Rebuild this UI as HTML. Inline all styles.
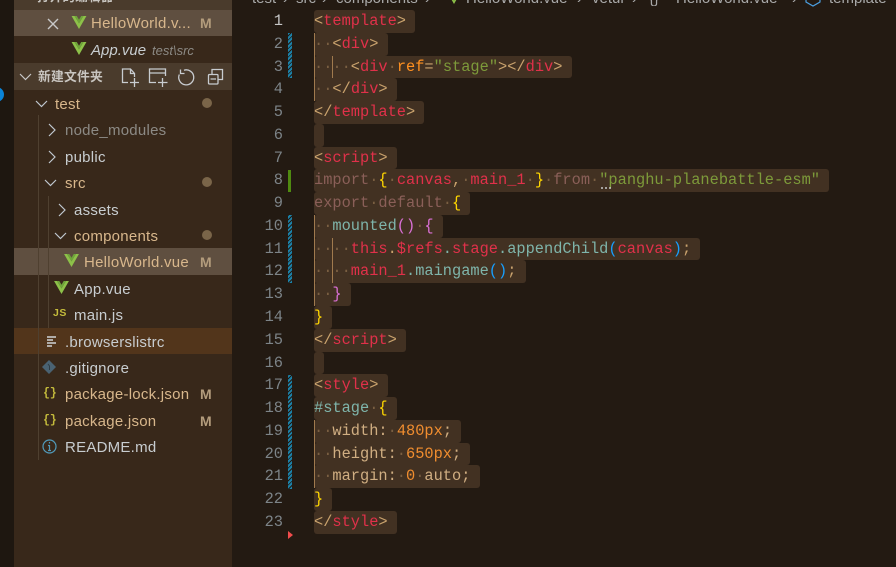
<!DOCTYPE html>
<html><head><meta charset="utf-8">
<style>
html,body{margin:0;padding:0;background:#231a12;width:896px;height:567px;overflow:hidden}
*{box-sizing:border-box}
.abs{position:absolute}
#act{left:0;top:0;width:14px;height:567px;background:#1e1710;overflow:hidden}
#side{left:14px;top:0;width:218px;height:567px;background:#38281a;overflow:hidden}
.t{position:absolute;font:15px/28px "Liberation Sans","Noto Sans CJK SC",sans-serif;white-space:pre;letter-spacing:.25px}
.bar{position:absolute;left:14px;width:218px}
.y{color:#d8b78c}.w{color:#c8cdd0}.g{color:#8c8a85}
.m{position:absolute;left:200px;font:bold 14px/26px "Liberation Sans",sans-serif;color:#b39c7c}
.dot{position:absolute;left:202px;width:10px;height:10px;border-radius:50%;background:#7a6549}
.l{position:absolute;left:314px;height:22.77px;background:#423122;border-radius:3px;font:15.33px/22.77px "Liberation Mono",monospace;white-space:pre;padding-right:1ch}
.n{position:absolute;left:250px;width:33px;text-align:right;font:15.33px/22.77px "Liberation Mono",monospace;color:#7d8488}
.d{color:#7a5f42}.b{color:#c9a26d}.r{color:#e0314a}.o{color:#ff9020}.s{color:#7d9a3a}.i{color:#8a5f58}.yy{color:#ffd700}.c{color:#7fb5ab}.p{color:#da70d6}.bl{color:#179fff}.q{color:#d0ae82}.v{color:#f08d2f}
.gd{position:absolute;width:1px;background:#a07a4e}
.hb{position:absolute;left:288px;width:4px;background:repeating-linear-gradient(-45deg,#1b81a8 0 2px,#231a12 2px 3px)}
.bc{position:absolute;top:-10px;font:15px/18px "Liberation Sans",sans-serif;color:#a8a8a8;white-space:pre}
</style></head><body>
<svg width="0" height="0" style="position:absolute"><defs>
<symbol id="vue" viewBox="0 0 16 14"><polygon points="0,0 3.2,0 8,8 12.8,0 16,0 8,14" fill="#8dc149"/><polygon points="3.2,0 5.6,0 8,4 10.4,0 12.8,0 8,8" fill="#6fa53a"/></symbol>
</defs></svg>

<div id="act" class="abs"><div class="abs" style="left:-11px;top:87px;width:15px;height:15px;border-radius:50%;background:#0a84d8"></div></div>
<div id="side" class="abs"></div>

<div class="bar" style="top:0;height:10px;background:#4a3b2c"></div>
<div class="t" style="left:37px;top:-17px;font-weight:bold;font-size:12.5px;color:#c8c5c0">打开的编辑器</div>
<div class="bar" style="top:10px;height:26px;background:#5f4f40"></div>
<div class="bar" style="top:63px;height:27px;background:#4a3b2c"></div>
<div class="bar" style="top:248px;height:27px;background:#5f4f40"></div>
<div class="bar" style="top:328px;height:26px;background:#52351b"></div>

<div class="gd" style="left:38px;top:115px;height:345px;background:#4f4030"></div>
<div class="gd" style="left:48px;top:196px;height:132px;background:#4f4030"></div>

<svg class="abs" style="left:46px;top:17px" width="14" height="14"><path d="M2 2L12 12M12 2L2 12" stroke="#c8c8c8" stroke-width="1.4"/></svg>
<svg class="abs" style="left:71px;top:16px" width="16" height="13"><use href="#vue"/></svg>
<div class="t y" style="left:91px;top:10px">HelloWorld.v...</div><div class="m" style="top:10px">M</div>
<svg class="abs" style="left:71px;top:42px" width="16" height="13"><use href="#vue"/></svg>
<div class="t w" style="left:91px;top:37px;font-style:italic;letter-spacing:0">App.vue</div>
<div class="t g" style="left:152px;top:37px;font-style:italic;font-size:13px;letter-spacing:0">test\src</div>

<svg class="abs" style="left:19px;top:71px" width="14" height="12"><path d="M1 3L6.5 8.5L12 3" fill="none" stroke="#c8c8c8" stroke-width="1.2"/></svg>
<div class="t" style="left:38px;top:63px;font-size:12.8px;font-weight:bold;letter-spacing:.2px;color:#c8c5c0">新建文件夹</div>
<svg class="abs" style="left:115px;top:62px" width="115" height="28" fill="none" stroke="#c8ccd0" stroke-width="1.3">
<path d="M13 20.500H7.500V7H15.500L19.500 11.500V15M15.500 7V11.500H19.500M15 20.500H24M19.500 16V25"/>
<path d="M41 20.500H34.500V7H50.500V14M34.500 11H50.500M43 20.500H52.500M47.500 16V25"/>
<path d="M69 8.200A7.500 7.500 0 1 1 64.300 12.500M65.500 7.500V11.500H69.500"/>
<rect x="93.500" y="12.500" width="9.500" height="9.500" rx="1"/><path d="M97 12.500V7.500H107.500V17.500H103M95.500 17H101"/>
</svg>

<svg class="abs" style="left:35px;top:98px" width="14" height="12"><path d="M1 3L6.500 8.500L12 3" fill="none" stroke="#c0c8d0" stroke-width="1.2"/></svg>
<div class="t y" style="left:55px;top:91px">test</div><div class="dot" style="top:98px"></div>
<svg class="abs" style="left:47px;top:123px" width="10" height="14"><path d="M2 1L8 7L2 13" fill="none" stroke="#c0c8d0" stroke-width="1.2"/></svg>
<div class="t g" style="left:65px;top:117px">node_modules</div>
<svg class="abs" style="left:47px;top:150px" width="10" height="14"><path d="M2 1L8 7L2 13" fill="none" stroke="#c0c8d0" stroke-width="1.2"/></svg>
<div class="t w" style="left:65px;top:144px">public</div>
<svg class="abs" style="left:44px;top:177px" width="14" height="12"><path d="M1 3L6.500 8.500L12 3" fill="none" stroke="#c0c8d0" stroke-width="1.2"/></svg>
<div class="t y" style="left:65px;top:170px">src</div><div class="dot" style="top:177px"></div>
<svg class="abs" style="left:57px;top:203px" width="10" height="14"><path d="M2 1L8 7L2 13" fill="none" stroke="#c0c8d0" stroke-width="1.2"/></svg>
<div class="t w" style="left:74px;top:197px">assets</div>
<svg class="abs" style="left:54px;top:230px" width="14" height="12"><path d="M1 3L6.500 8.500L12 3" fill="none" stroke="#c0c8d0" stroke-width="1.2"/></svg>
<div class="t y" style="left:74px;top:223px">components</div><div class="dot" style="top:230px"></div>
<svg class="abs" style="left:64px;top:254px" width="15" height="13"><use href="#vue"/></svg>
<div class="t y" style="left:84px;top:249px">HelloWorld.vue</div><div class="m" style="top:249px">M</div>
<svg class="abs" style="left:54px;top:281px" width="15" height="13"><use href="#vue"/></svg>
<div class="t w" style="left:74px;top:276px">App.vue</div>
<div class="t" style="left:53px;top:300px;font:bold 10.5px/26px 'Liberation Sans',sans-serif;color:#c4bb3c;letter-spacing:.5px">JS</div>
<div class="t w" style="left:74px;top:302px">main.js</div>
<svg class="abs" style="left:46px;top:335px" width="12" height="12" stroke="#bdbdbd" stroke-width="1.800"><path d="M1 2H10M1 5H7M1 8H10M1 11H6"/></svg>
<div class="t w" style="left:65px;top:329px">.browserslistrc</div>
<svg class="abs" style="left:42px;top:360px" width="14" height="14"><polygon points="7,0 14,7 7,14 0,7" fill="#4a6272"/><path d="M6 4L7.500 6V10" stroke="#2f3d46" fill="none"/></svg>
<div class="t w" style="left:65px;top:355px">.gitignore</div>
<div class="t" style="left:43px;top:381px;font:bold 11.5px/26px 'Liberation Mono',monospace;color:#c4bb3c;letter-spacing:0">{}</div>
<div class="t y" style="left:65px;top:381px">package-lock.json</div><div class="m" style="top:381px">M</div>
<div class="t" style="left:43px;top:408px;font:bold 11.5px/26px 'Liberation Mono',monospace;color:#c4bb3c;letter-spacing:0">{}</div>
<div class="t y" style="left:65px;top:408px">package.json</div><div class="m" style="top:408px">M</div>
<svg class="abs" style="left:42px;top:439px" width="15" height="15" fill="none"><circle cx="7.500" cy="7.500" r="6.500" stroke="#519aba" stroke-width="1.200"/><path d="M7.500 6V11.500M6 11.500H9M6 6.500H7.500M7.500 3V4.500" stroke="#519aba" stroke-width="1.200"/></svg>
<div class="t w" style="left:65px;top:434px">README.md</div>

<div class="bc" style="left:252px">test</div><div class="bc" style="left:283px">›</div>
<div class="bc" style="left:296px">src</div><div class="bc" style="left:322px">›</div>
<div class="bc" style="left:336px">components</div><div class="bc" style="left:425px">›</div>
<svg class="abs" style="left:449px;top:-4px" width="10" height="8"><use href="#vue"/></svg>
<div class="bc" style="left:466px">HelloWorld.vue</div><div class="bc" style="left:577px">›</div>
<div class="bc" style="left:592px">vetur</div><div class="bc" style="left:632px">›</div>
<div class="bc" style="left:649px">{}</div>
<div class="bc" style="left:676px">HelloWorld.vue</div><div class="bc" style="left:792px">›</div>
<svg class="abs" style="left:805px;top:-6px" width="16" height="13" fill="none"><path d="M8 1L15 5V8L8 12L1 8V5Z" stroke="#4b9fe0" stroke-width="1.200"/></svg>
<div class="bc" style="left:829px">template</div>

<div class="n" style="top:10px;color:#c6c6c6">1</div><div class="n" style="top:32.770px">2</div><div class="n" style="top:55.540px">3</div><div class="n" style="top:78.310px">4</div><div class="n" style="top:101.080px">5</div><div class="n" style="top:123.850px">6</div><div class="n" style="top:146.620px">7</div><div class="n" style="top:169.390px">8</div><div class="n" style="top:192.160px">9</div><div class="n" style="top:214.930px">10</div><div class="n" style="top:237.700px">11</div><div class="n" style="top:260.470px">12</div><div class="n" style="top:283.240px">13</div><div class="n" style="top:306.010px">14</div><div class="n" style="top:328.780px">15</div><div class="n" style="top:351.550px">16</div><div class="n" style="top:374.320px">17</div><div class="n" style="top:397.090px">18</div><div class="n" style="top:419.860px">19</div><div class="n" style="top:442.630px">20</div><div class="n" style="top:465.400px">21</div><div class="n" style="top:488.170px">22</div><div class="n" style="top:510.940px">23</div>

<div class="hb" style="top:33px;height:45px"></div>
<div class="abs" style="left:288px;top:170px;width:3px;height:22px;background:#4f8a10"></div>
<div class="hb" style="top:215px;height:68px"></div>
<div class="hb" style="top:375px;height:114px"></div>
<svg class="abs" style="left:288px;top:531px" width="5" height="8"><polygon points="0,0 5,4 0,8" fill="#f14c4c"/></svg>

<div class="l" style="top:10px"><span class="b">&lt;</span><span class="r">template</span><span class="b">&gt;</span></div>
<div class="l" style="top:32.770px"><span class="d">··</span><span class="b">&lt;</span><span class="r">div</span><span class="b">&gt;</span></div>
<div class="l" style="top:55.540px"><span class="d">····</span><span class="b">&lt;</span><span class="r">div</span><span class="d">·</span><span class="o">ref</span><span class="b">=</span><span class="s">"stage"</span><span class="b">&gt;&lt;/</span><span class="r">div</span><span class="b">&gt;</span></div>
<div class="l" style="top:78.310px"><span class="d">··</span><span class="b">&lt;/</span><span class="r">div</span><span class="b">&gt;</span></div>
<div class="l" style="top:101.080px"><span class="b">&lt;/</span><span class="r">template</span><span class="b">&gt;</span></div>
<div class="l" style="top:123.850px;width:10px;padding:0"></div>
<div class="l" style="top:146.620px"><span class="b">&lt;</span><span class="r">script</span><span class="b">&gt;</span></div>
<div class="l" style="top:169.390px"><span class="i">import</span><span class="d">·</span><span class="yy">{</span><span class="d">·</span><span class="r">canvas</span><span class="b">,</span><span class="d">·</span><span class="r">main_1</span><span class="d">·</span><span class="yy">}</span><span class="d">·</span><span class="i">from</span><span class="d">·</span><span class="s">"panghu-planebattle-esm"</span></div>
<div class="l" style="top:192.160px"><span class="i">export</span><span class="d">·</span><span class="i">default</span><span class="d">·</span><span class="yy">{</span></div>
<div class="l" style="top:214.930px"><span class="d">··</span><span class="c">mounted</span><span class="p">()</span><span class="d">·</span><span class="p">{</span></div>
<div class="l" style="top:237.700px"><span class="d">····</span><span class="r">this</span><span class="b">.</span><span class="r">$refs</span><span class="c">.</span><span class="r">stage</span><span class="c">.appendChild</span><span class="bl">(</span><span class="r">canvas</span><span class="bl">)</span><span class="b">;</span></div>
<div class="l" style="top:260.470px"><span class="d">····</span><span class="r">main_1</span><span class="c">.maingame</span><span class="bl">()</span><span class="b">;</span></div>
<div class="l" style="top:283.240px"><span class="d">··</span><span class="p">}</span></div>
<div class="l" style="top:306.010px"><span class="yy">}</span></div>
<div class="l" style="top:328.780px"><span class="b">&lt;/</span><span class="r">script</span><span class="b">&gt;</span></div>
<div class="l" style="top:351.550px;width:10px;padding:0"></div>
<div class="l" style="top:374.320px"><span class="b">&lt;</span><span class="r">style</span><span class="b">&gt;</span></div>
<div class="l" style="top:397.090px"><span class="c">#stage</span><span class="d">·</span><span class="yy">{</span></div>
<div class="l" style="top:419.860px"><span class="d">··</span><span class="q">width:</span><span class="d">·</span><span class="v">480px</span><span class="q">;</span></div>
<div class="l" style="top:442.630px"><span class="d">··</span><span class="q">height:</span><span class="d">·</span><span class="v">650px</span><span class="q">;</span></div>
<div class="l" style="top:465.400px"><span class="d">··</span><span class="q">margin:</span><span class="d">·</span><span class="v">0</span><span class="d">·</span><span class="q">auto;</span></div>
<div class="l" style="top:488.170px"><span class="yy">}</span></div>
<div class="l" style="top:510.940px"><span class="b">&lt;/</span><span class="r">style</span><span class="b">&gt;</span></div>

<div class="gd" style="left:314px;top:33px;height:68px"></div>
<div class="gd" style="left:332px;top:56px;height:22px"></div>
<div class="gd" style="left:314px;top:215px;height:91px"></div>
<div class="gd" style="left:332px;top:238px;height:45px"></div>
<div class="gd" style="left:314px;top:420px;height:68px"></div>
<svg class="abs" style="left:600px;top:186px" width="12" height="4"><path d="M1 2H3M5 2H7M9 2H11" stroke="#c8c8c8" stroke-width="1.500"/></svg>
</body></html>
